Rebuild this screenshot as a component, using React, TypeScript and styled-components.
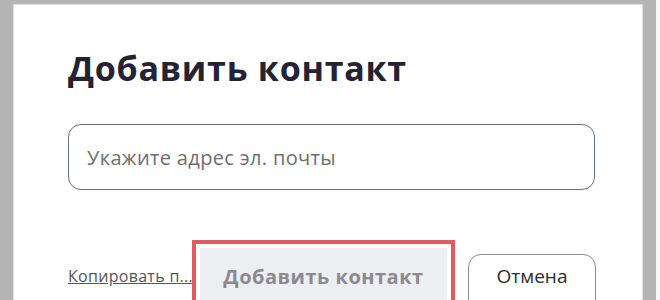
import React from 'react';
import styled, { createGlobalStyle } from 'styled-components';

const Global = createGlobalStyle`
  html, body {
    margin: 0;
    padding: 0;
    background: #ffffff;
    overflow: hidden;
  }
  body {
    font-family: "Open Sans", "Noto Sans", sans-serif;
  }
`;

const Screen = styled.div`
  width: 660px;
  height: 300px;
  overflow: hidden;
  background: #f7f7f7;
`;

const Window = styled.div`
  box-sizing: border-box;
  width: 656px;
  height: 320px;
  border-style: solid;
  border-color: #b4b4b4;
  border-width: 4px 13px 0 13px;
  background: #ffffff;
  box-shadow: inset 1px 1px 0 #e2e2e2, inset -1px 0 0 #e2e2e2;
  padding: 41px 36px 0 55px;
  display: flex;
  flex-direction: column;
`;

const Title = styled.h1`
  margin: 0;
  font-size: 34px;
  font-weight: 700;
  line-height: 46px;
  color: #232333;
  letter-spacing: 0.75px;
`;

const EmailInput = styled.input`
  box-sizing: border-box;
  margin-top: 33px;
  width: 527px;
  height: 67px;
  border: 1.5px solid #66717b;
  border-radius: 13px;
  padding: 0 18px;
  font-family: inherit;
  font-size: 20px;
  letter-spacing: 0.35px;
  color: #333;
  outline: none;
  background: #fff;

  &::placeholder {
    color: #6e6e6e;
  }
`;

const Footer = styled.div`
  margin-top: 50px;
  display: flex;
  align-items: flex-start;
`;

const CopyLink = styled.a`
  margin-top: 25px;
  width: 124px;
  font-size: 16px;
  letter-spacing: 0.3px;
  color: #555;
  text-decoration: underline;
  white-space: nowrap;
  cursor: pointer;
`;

const Highlight = styled.div`
  box-sizing: border-box;
  width: 263px;
  height: 80px;
  border: 4px solid #df5d61;
  padding: 4px 4px 0 4px;
  display: flex;
`;

const PrimaryButton = styled.button`
  flex: 1;
  border: none;
  background: #eceef2;
  color: #8a8a8f;
  font-family: inherit;
  font-size: 20px;
  font-weight: 700;
  padding: 0 0 12px 0;
  letter-spacing: 0.5px;
`;

const CancelButton = styled.button`
  box-sizing: border-box;
  margin-left: 13px;
  margin-top: 14px;
  width: 128px;
  height: 60px;
  border: 1.5px solid #8a8f95;
  border-radius: 13px;
  background: #fff;
  color: #2b2b2b;
  font-family: inherit;
  font-size: 19px;
  padding: 0 0 16px 0;
`;

export default function App() {
  return (
    <>
      <Global />
      <Screen>
        <Window>
          <Title>Добавить контакт</Title>
          <EmailInput placeholder="Укажите адрес эл. почты" />
          <Footer>
            <CopyLink>Копировать п...</CopyLink>
            <Highlight>
              <PrimaryButton>Добавить контакт</PrimaryButton>
            </Highlight>
            <CancelButton>Отмена</CancelButton>
          </Footer>
        </Window>
      </Screen>
    </>
  );
}
